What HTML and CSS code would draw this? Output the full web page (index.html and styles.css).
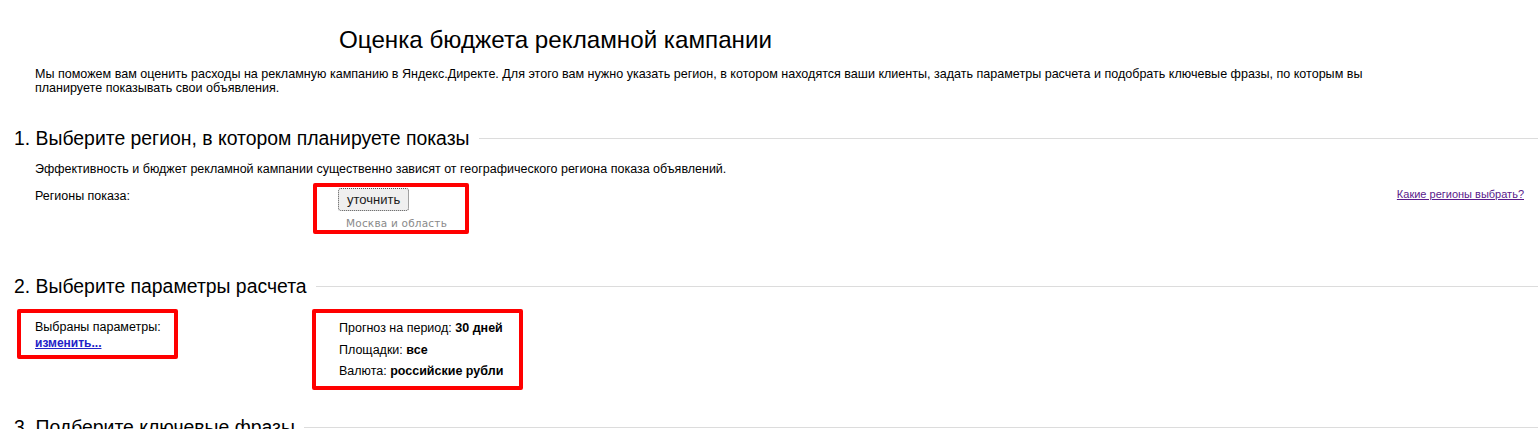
FILE: index.html
```html
<!DOCTYPE html>
<html lang="ru">
<head>
<meta charset="utf-8">
<title>Оценка бюджета рекламной кампании</title>
<link rel="stylesheet" href="styles.css">
</head>
<body>
<div class="page">
  <h1 class="title">Оценка бюджета рекламной кампании</h1>
  <p class="intro">Мы поможем вам оценить расходы на рекламную кампанию в Яндекс.Директе. Для этого вам нужно указать регион, в котором находятся ваши клиенты, задать параметры расчета и подобрать ключевые фразы, по которым вы планируете показывать свои объявления.</p>

  <section class="sec sec-1">
    <div class="sec-head"><h2>1. Выберите регион, в котором планируете показы</h2><span class="rule"></span></div>
    <div class="sec-body">
      <p class="note">Эффективность и бюджет рекламной кампании существенно зависят от географического региона показа объявлений.</p>
      <div class="region-row">
        <div class="label">Регионы показа:</div>
        <div class="mark region-box">
          <button class="btn" type="button">уточнить</button>
          <div class="region-name">Москва и область</div>
        </div>
        <a class="help" href="#">Какие регионы выбрать?</a>
      </div>
    </div>
  </section>

  <section class="sec sec-2">
    <div class="sec-head"><h2>2. Выберите параметры расчета</h2><span class="rule"></span></div>
    <div class="params-row">
      <div class="mark params-label">
        <div>Выбраны параметры:</div>
        <a class="change" href="#">изменить...</a>
      </div>
      <div class="mark params-list">
        <div class="param">Прогноз на период: <b>30 дней</b></div>
        <div class="param">Площадки: <b>все</b></div>
        <div class="param">Валюта: <b>российские рубли</b></div>
      </div>
    </div>
  </section>

  <section class="sec sec-3">
    <div class="sec-head"><h2>3. Подберите ключевые фразы</h2><span class="rule"></span></div>
  </section>
</div>
</body>
</html>
```

FILE: styles.css
```css
* { box-sizing: border-box; }
html, body { margin: 0; padding: 0; background: #fff; }
body {
  font-family: "Liberation Sans", Arial, sans-serif;
  font-size: 13px;
  color: #000;
  overflow: hidden;
}
.page { padding: 0 0 0 14px; }

.title {
  margin: 25px 0 0 325px;
  font-size: 24.2px;
  font-weight: normal;
  line-height: 30px;
}
.intro {
  margin: 12px 160px 0 21px;
  font-size: 12.55px;
  line-height: 14px;
}

.sec-head {
  display: flex;
  align-items: center;
  gap: 9px;
}
.sec-head h2 {
  margin: 0;
  font-size: 19.4px;
  font-weight: normal;
  line-height: 24px;
  white-space: nowrap;
}
.rule { flex: 1; border-top: 1px solid #dcdcdc; }

.sec-1 { margin-top: 31px; }
.sec-body { padding-left: 21px; }
.note { margin: 12px 0 0; font-size: 12.5px; line-height: 14px; }

.region-row {
  display: flex;
  align-items: flex-start;
  margin-top: 7px;
}
.label { width: 278px; font-size: 12.5px; line-height: 14px; padding-top: 6px; }
.mark { border: 4px solid #ff0000; border-radius: 2px; }
.region-box { width: 156px; height: 51px; padding: 1px 0 0 21px; }
.btn {
  display: block;
  font-family: "Liberation Sans", Arial, sans-serif;
  font-size: 13px;
  color: #1a1a1a;
  background: #efefef;
  border: 1px dotted #555;
  border-radius: 3px;
  padding: 3px 8px 3px;
  height: 23px;
  line-height: 15px;
}
.region-name {
  margin: 6px 0 0 8px;
  font-family: "DejaVu Sans", Verdana, sans-serif;
  font-size: 10.5px;
  color: #8a8a8a;
  letter-spacing: 0.2px;
}
.help {
  margin-left: auto;
  margin-right: 14px;
  padding-top: 5px;
  font-size: 11px;
  color: #5a1a8b;
}

.sec-2 { margin-top: 40px; }
.params-row { display: flex; align-items: flex-start; margin-top: 11px; padding-left: 3px; }
.params-label {
  width: 161px; height: 50px;
  padding: 7px 0 0 14px;
  font-size: 12.5px; line-height: 15.5px;
}
.change { color: #2323c8; font-weight: bold; font-size: 12px; }
.params-list {
  margin-left: 134px;
  width: 211px; height: 81px;
  padding: 5px 0 0 23px;
  font-size: 12.5px;
}
.param { line-height: 21.5px; }
.param b { font-weight: bold; }

.sec-3 { margin-top: 25px; }
```
